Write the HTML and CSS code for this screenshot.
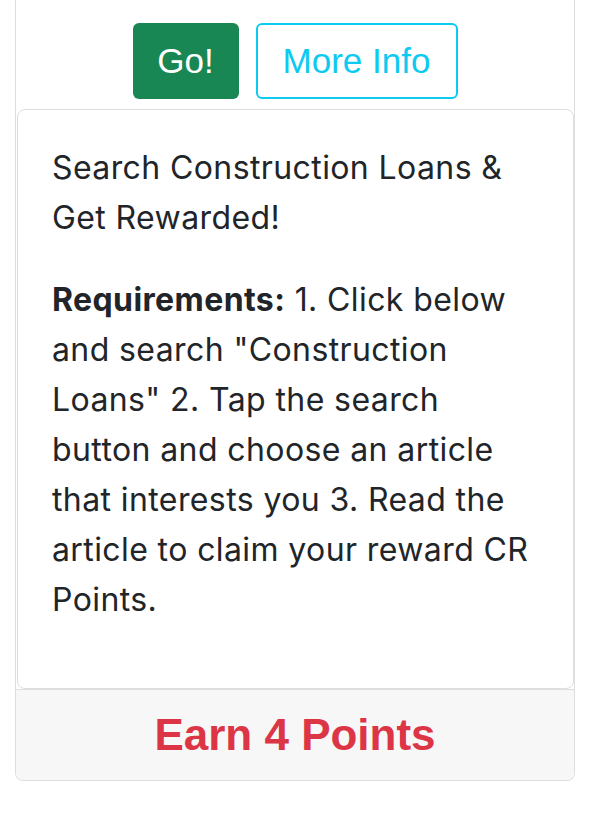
FILE: index.html
```html
<!DOCTYPE html>
<html lang="en">
<head>
<meta charset="utf-8">
<title>Offer</title>
<link rel="stylesheet" href="styles.css">
</head>
<body>
<div class="offer">
  <div class="actions">
    <a class="btn btn-go" href="#">Go!</a>
    <a class="btn btn-info" href="#">More Info</a>
  </div>
  <div class="desc">
    <p>Search Construction Loans &amp; Get Rewarded!</p>
    <p><strong>Requirements:</strong> 1. Click below and search "Construction Loans" 2. Tap the search button and choose an article that interests you 3. Read the article to claim your reward CR Points.</p>
  </div>
  <div class="offer-footer">Earn 4 Points</div>
</div>
</body>
</html>
```
FILE: styles.css
```css
html, body {
  margin: 0;
  padding: 0;
  background: #ffffff;
}
body {
  font-family: Inter, "Noto Sans", sans-serif;
  color: #212529;
}
.offer {
  margin: 0 25px 0 15px;
  border: 1px solid #dedede;
  border-top: none;
  border-radius: 0 0 8px 8px;
}
.actions {
  display: flex;
  justify-content: center;
  gap: 17px;
  padding-top: 23px;
  margin-bottom: 10px;
}
.btn {
  display: flex;
  align-items: center;
  justify-content: center;
  height: 76px;
  box-sizing: border-box;
  border-radius: 6px;
  font-family: "Liberation Sans", Arial, sans-serif;
  font-size: 35px;
  text-decoration: none;
}
.btn-go {
  width: 106px;
  background: #198754;
  color: #ffffff;
}
.btn-info {
  width: 202px;
  border: 2px solid #0dcaf0;
  color: #0dcaf0;
}
.desc {
  margin: 0 0 0 1px;
  border: 1px solid #dedede;
  border-radius: 8px;
  padding: 33px 34px 31px 34px;
  font-size: 32px;
  line-height: 50px;
  letter-spacing: 0.4px;
}
.desc p {
  margin: 0 0 32px 0;
}
.offer-footer {
  background: #f7f7f7;
  border-top: 1px solid #dedede;
  border-radius: 0 0 8px 8px;
  height: 90px;
  display: flex;
  align-items: center;
  justify-content: center;
  font-family: "Liberation Sans", Arial, sans-serif;
  font-weight: bold;
  font-size: 44px;
  color: #dc3545;
}
```
